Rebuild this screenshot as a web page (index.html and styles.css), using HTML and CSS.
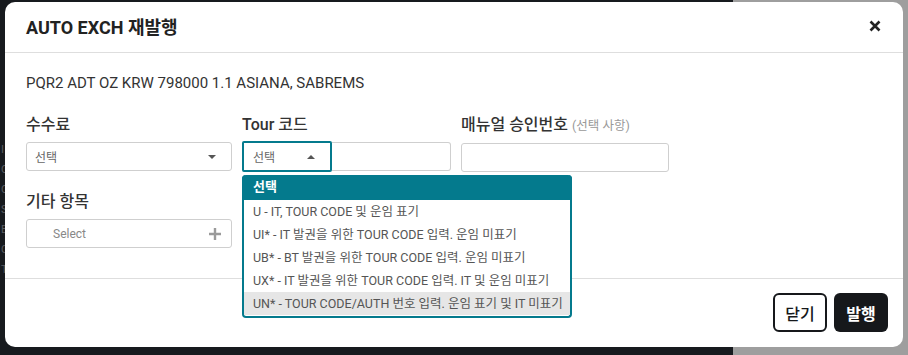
FILE: index.html
```html
<!DOCTYPE html>
<html lang="ko">

<head>
    <meta charset="UTF-8">
    <title>AUTO EXCH 재발행</title>
    <link rel="stylesheet" href="styles.css">
</head>

<body>
    <div class="page">
        <div class="page-left">
            <div class="bg-text">I<br>O<br>O<br>S<br>B<br>C<br>T</div>
        </div>
        <div class="page-right"></div>
    </div>

    <div class="modal">
        <div class="modal-header">
            <div class="modal-title">AUTO EXCH 재발행</div>
            <div class="modal-close">
                <svg width="12" height="12" viewBox="0 0 12 12">
                    <path d="M1.5 1.5 L10.5 10.5 M10.5 1.5 L1.5 10.5" stroke="#222" stroke-width="2.6" stroke-linecap="butt" />
                </svg>
            </div>
        </div>

        <div class="modal-body">
            <div class="pnr-line">PQR2 ADT OZ KRW 798000 1.1 ASIANA, SABREMS</div>

            <div class="form-row">
                <div class="field field-fee">
                    <div class="field-label">수수료</div>
                    <div class="select-box">
                        <span class="select-text">선택</span>
                        <span class="caret-down"></span>
                    </div>
                </div>
                <div class="field field-tour">
                    <div class="field-label">Tour 코드</div>
                    <div class="tour-group">
                        <div class="tour-select">
                            <span class="select-text">선택</span>
                            <span class="caret-up"></span>
                        </div>
                        <div class="tour-input"></div>
                    </div>
                </div>
                <div class="field field-manual">
                    <div class="field-label">매뉴얼 승인번호 <span class="optional">(선택 사항)</span></div>
                    <div class="text-input"></div>
                </div>
            </div>

            <div class="form-row row-second">
                <div class="field field-fee">
                    <div class="field-label">기타 항목</div>
                    <div class="select-box">
                        <span class="select-placeholder">Select</span>
                        <span class="plus">
                            <svg width="12" height="12" viewBox="0 0 12 12">
                                <path d="M6 0 V12 M0 6 H12" stroke="#9a9a9a" stroke-width="2.4" />
                            </svg>
                        </span>
                    </div>
                </div>
            </div>
        </div>

        <div class="modal-footer">
            <button class="btn btn-close">닫기</button>
            <button class="btn btn-issue">발행</button>
        </div>

        <ul class="dropdown">
            <li class="dropdown-head">선택</li>
            <li>U - IT, TOUR CODE 및 운임 표기</li>
            <li>UI* - IT 발권을 위한 TOUR CODE 입력. 운임 미표기</li>
            <li>UB* - BT 발권을 위한 TOUR CODE 입력. 운임 미표기</li>
            <li>UX* - IT 발권을 위한 TOUR CODE 입력. IT 및 운임 미표기</li>
            <li class="hover">UN* - TOUR CODE/AUTH 번호 입력. 운임 표기 및 IT 미표기</li>
        </ul>
    </div>
</body>

</html>
```

FILE: styles.css
```css
* {
    margin: 0;
    padding: 0;
    box-sizing: border-box;
}

body {
    width: 908px;
    height: 355px;
    overflow: hidden;
    font-family: Roboto, "Noto Sans CJK KR", sans-serif;
    color: #333;
}

.page {
    display: flex;
    height: 355px;
}

.page-left {
    width: 733px;
    background-color: #171a1e;
    padding-top: 140px;
}

.page-right {
    flex: 1;
    background-color: #9e9e9e;
}

.bg-text {
    font-size: 11px;
    line-height: 20px;
    color: #5a5d61;
    padding-left: 1px;
}

.modal {
    position: absolute;
    left: 5px;
    top: 2px;
    width: 898px;
    height: 345px;
    background-color: #fff;
    border-radius: 10px;
    display: flex;
    flex-direction: column;
}

.modal-header {
    height: 51px;
    display: flex;
    align-items: center;
    justify-content: space-between;
    padding: 0 21px 2px 21px;
    border-bottom: 1px solid #dedede;
}

.modal-title {
    font-size: 18px;
    font-weight: 700;
    color: #222;
}

.modal-close {
    display: flex;
    margin-right: 1px;
}

.modal-body {
    height: 225px;
    padding: 20px 21px 0 21px;
}

.pnr-line {
    font-size: 15px;
    line-height: 20px;
    color: #333;
}

.form-row {
    display: flex;
    gap: 10px;
    margin-top: 22px;
}

.row-second {
    margin-top: 20px;
}

.field-label {
    font-size: 16px;
    font-weight: 500;
    line-height: 20px;
    color: #333;
    margin-bottom: 7px;
    white-space: nowrap;
}

.optional {
    font-size: 12.5px;
    font-weight: 400;
    color: #999;
}

.field-fee {
    width: 206px;
}

.field-tour {
    width: 209px;
}

.field-manual {
    width: 208px;
}

.select-box {
    height: 29px;
    border: 1px solid #cfcfcf;
    border-radius: 3px;
    display: flex;
    align-items: center;
    justify-content: space-between;
    padding: 0 12px 0 8px;
}

.select-text {
    font-size: 12px;
    color: #666;
}

.select-placeholder {
    font-size: 12px;
    color: #888;
    margin-left: 18px;
}

.caret-down {
    width: 0;
    height: 0;
    border-left: 4px solid transparent;
    border-right: 4px solid transparent;
    border-top: 4px solid #555;
    margin-right: 3px;
}

.caret-up {
    width: 0;
    height: 0;
    border-left: 4px solid transparent;
    border-right: 4px solid transparent;
    border-bottom: 4px solid #555;
}

.plus {
    display: flex;
    margin-right: -2px;
}

.tour-group {
    display: flex;
    height: 29px;
}

.tour-select {
    width: 90px;
    height: 31px;
    margin-top: -1px;
    border: 2px solid #047a8d;
    border-radius: 2px;
    display: flex;
    align-items: center;
    justify-content: space-between;
    padding: 0 15px 0 9px;
}

.tour-input {
    flex: 1;
    border: 1px solid #cfcfcf;
    border-left: none;
    border-radius: 0 3px 3px 0;
}

.text-input {
    height: 29px;
    border: 1px solid #cfcfcf;
    border-radius: 3px;
}

.modal-footer {
    flex: 1;
    border-top: 1px solid #dedede;
    display: flex;
    justify-content: flex-end;
    align-items: flex-start;
    gap: 7px;
    padding: 14px 15px 0 0;
}

.btn {
    height: 39px;
    width: 54px;
    border-radius: 6px;
    font-family: Roboto, "Noto Sans CJK KR", sans-serif;
    font-size: 16px;
    font-weight: 700;
    cursor: pointer;
}

.btn-close {
    background-color: #fff;
    border: 2px solid #16181b;
    color: #16181b;
    font-weight: 500;
}

.btn-issue {
    background-color: #16181b;
    border: none;
    color: #fff;
}

.dropdown {
    position: absolute;
    left: 237px;
    top: 173px;
    width: 330px;
    list-style: none;
    border: 2px solid #047a8d;
    border-top: none;
    border-radius: 4px;
    background-color: #fff;
    padding-bottom: 1px;
}

.dropdown li {
    height: 23px;
    line-height: 23px;
    font-size: 12.5px;
    color: #555;
    padding-left: 9px;
}

.dropdown li.dropdown-head {
    height: 25px;
    line-height: 23px;
    margin: 0 -2px;
    padding-left: 11px;
    background-color: #047a8d;
    color: #fff;
    font-weight: 700;
    font-size: 13px;
    border-radius: 4px 4px 0 0;
}

.dropdown li.hover {
    background-color: #e6e6e6;
}
```
